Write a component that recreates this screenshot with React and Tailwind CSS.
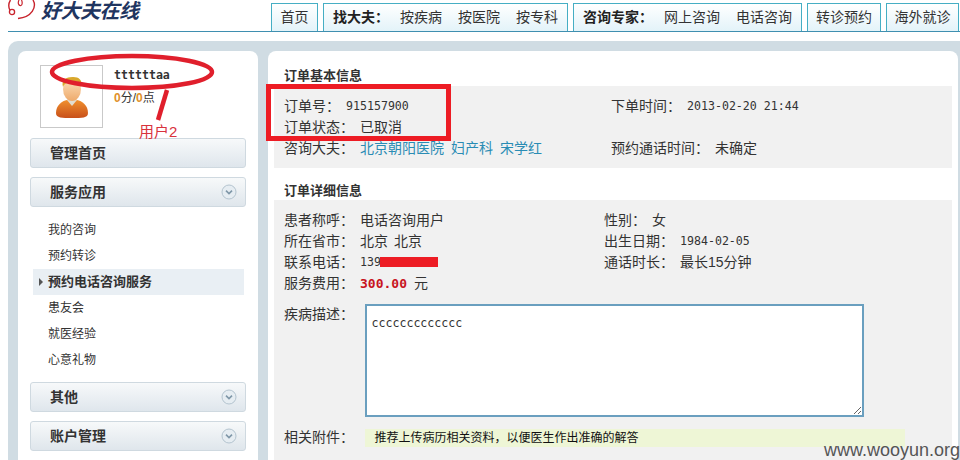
import React from "react";

const cjk = "font-['Liberation_Sans','Noto_Sans_CJK_SC',sans-serif]";
const mono = "font-['DejaVu_Sans_Mono','Noto_Sans_CJK_SC',monospace]";

function NavLink({ children, bold, className = "" }) {
  return <span className={(bold ? "font-bold text-[#222] " : "text-[#333] ") + className}>{children}</span>;
}

function NavTab({ className, children }) {
  return (
    <div className={"flex h-[28px] items-center border border-b-0 border-[#45aec4] bg-gradient-to-b from-white to-[#e3f3f9] text-[14px] " + className}>
      {children}
    </div>
  );
}

function Chevron() {
  return (
    <svg width="16" height="16" viewBox="0 0 16 16" className="shrink-0">
      <circle cx="8" cy="8" r="7" fill="#e6edf2" stroke="#b4c4cf" strokeWidth="1" />
      <path d="M5 6.6 L8 9.6 L11 6.6" fill="none" stroke="#7f97a8" strokeWidth="1.6" />
    </svg>
  );
}

function SideButton({ label, chevron, className = "" }) {
  return (
    <div className={"flex h-[30px] w-[216px] items-center justify-between rounded-[3px] border border-[#cfd9e0] bg-gradient-to-b from-[#f7f9fa] to-[#dfe6ec] pl-[19px] pr-[8px] text-[14px] font-bold text-[#333] " + className}>
      <span>{label}</span>
      {chevron ? <Chevron /> : null}
    </div>
  );
}

function MenuItem({ children, active }) {
  if (active) {
    return (
      <div className="relative flex h-[26px] w-[211px] items-center bg-[#e9eff4] pl-[15px] text-[13px] font-bold text-[#333]">
        <span className="absolute left-[6px] top-[9px] h-0 w-0 border-y-[4px] border-l-[4px] border-y-transparent border-l-[#555]"></span>
        {children}
      </div>
    );
  }
  return <div className="flex h-[26px] items-center pl-[15px] text-[12px] text-[#333]">{children}</div>;
}

function Avatar() {
  return (
    <div className="flex h-[63px] w-[63px] items-end justify-center border border-[#c9c9c9] bg-white pb-[9px]">
      <svg width="32" height="41" viewBox="0 0 32 41">
        <defs>
          <linearGradient id="shirt" x1="0" y1="0" x2="0" y2="1">
            <stop offset="0" stopColor="#f0902e" />
            <stop offset="1" stopColor="#c8501a" />
          </linearGradient>
          <linearGradient id="skin" x1="0" y1="0" x2="0" y2="1">
            <stop offset="0" stopColor="#fde3c0" />
            <stop offset="1" stopColor="#eeaa6c" />
          </linearGradient>
        </defs>
        <path d="M0 36 C0 28 6 24 11 23 L21 23 C26 24 32 28 32 36 C32 41 26 41 16 41 C6 41 0 41 0 36Z" fill="url(#shirt)" />
        <path d="M11 23 L16 29 L21 23 L20 20 L12 20Z" fill="#e2ddd0" />
        <ellipse cx="16" cy="12" rx="9" ry="12" fill="url(#skin)" />
        <path d="M7 10 C5 3 10 0 17 0 C23 0 27 3 25 10 C24 6 22 4 19 4 C14 5 9 5 7 10Z" fill="#d9a82c" />
      </svg>
    </div>
  );
}

function Label({ children, value, valueClass }) {
  return (
    <div className="flex h-[21px] items-center whitespace-nowrap text-[14px] text-[#333]">
      <span>{children}</span>
      <span className={"ml-[6px] " + valueClass}>{value}</span>
    </div>
  );
}

export default function App() {
  return (
    <div className={"relative h-[460px] w-[960px] overflow-hidden bg-white " + cjk}>
      {/* header */}
      <div className="ml-2 flex h-[32px] items-end border-b border-[#3f8fb0]">
        <div className="flex h-[31px] w-[263px] items-start">
          <svg width="30" height="20" viewBox="0 0 30 20" className="shrink-0">
            <circle cx="4" cy="12" r="2.6" fill="none" stroke="#c8232c" strokeWidth="1.3" />
            <path d="M2.5 0 C0.5 3 0.5 7 1.8 10 M25 0 C29 7 24 17 10 18.5" fill="none" stroke="#c8232c" strokeWidth="1.4" />
            <path d="M11 0 C9.5 3 10.5 6 13 5.5 C14.5 5 14.5 2 13.5 0" fill="none" stroke="#c8232c" strokeWidth="1.2" />
          </svg>
          <div className="-mt-[4px] ml-[3px] text-[20px] font-bold italic tracking-[-0.5px] whitespace-nowrap text-[#1f3560]">好大夫在线</div>
        </div>
        <div className="flex gap-[5px]">
          <NavTab className="w-[47px] justify-center"><NavLink>首页</NavLink></NavTab>
          <NavTab className="w-[245px] pl-[9px]">
            <NavLink bold>找大夫：</NavLink>
            <NavLink className="ml-[11px]">按疾病</NavLink>
            <NavLink className="ml-[16px]">按医院</NavLink>
            <NavLink className="ml-[16px]">按专科</NavLink>
          </NavTab>
          <NavTab className="w-[229px] pl-[9px]">
            <NavLink bold>咨询专家：</NavLink>
            <NavLink className="ml-[11px]">网上咨询</NavLink>
            <NavLink className="ml-[16px]">电话咨询</NavLink>
          </NavTab>
          <NavTab className="w-[74px] justify-center"><NavLink>转诊预约</NavLink></NavTab>
          <NavTab className="w-[73px] justify-center"><NavLink>海外就诊</NavLink></NavTab>
        </div>
      </div>

      {/* panel */}
      <div className="ml-2 mt-[9px] flex h-[419px] gap-[10px] rounded-tl-[10px] bg-[#d0dce3] pl-[10px] pr-[2px] pt-[10px]">
        <div className="w-[240px] shrink-0 rounded-t-[8px] bg-white pl-[12px]">
          <div className="ml-[10px] mt-[14px] flex h-[63px]">
            <Avatar />
            <div className="ml-[11px] pt-[2px]">
              <div className={"h-[16px] text-[11.6px] font-bold leading-[16px] text-[#333] " + mono}>ttttttaa</div>
              <div className="mt-[7px] text-[12px] leading-[16px] text-[#333]">
                <b className="text-[#e0902a]">0</b>分/<b className="text-[#e0902a]">0</b>点
              </div>
            </div>
          </div>
          <SideButton label="管理首页" className="mt-[10px]" />
          <SideButton label="服务应用" chevron className="mt-[9px]" />
          <div className="mb-[9px] ml-[3px] mt-[10px]">
            <MenuItem>我的咨询</MenuItem>
            <MenuItem>预约转诊</MenuItem>
            <MenuItem active>预约电话咨询服务</MenuItem>
            <MenuItem>患友会</MenuItem>
            <MenuItem>就医经验</MenuItem>
            <MenuItem>心意礼物</MenuItem>
          </div>
          <SideButton label="其他" chevron />
          <SideButton label="账户管理" chevron className="mt-[9px]" />
        </div>

        <div className="w-[690px] shrink-0 rounded-t-[8px] bg-white px-[6px]">
          <div className="flex h-[35px] items-end pb-[1px] pl-[10px] text-[13px] font-bold leading-[18px] text-[#333]">订单基本信息</div>
          <div className="grid h-[82px] grid-cols-[327px_1fr] content-start bg-[#f1f1f1] pl-[10px] pt-[10px]">
            <Label value="915157900" valueClass={"text-[11.6px] " + mono}>订单号：</Label>
            <Label value="2013-02-20 21:44" valueClass={"text-[11.6px] " + mono}>下单时间：</Label>
            <Label value="已取消" valueClass="">订单状态：</Label>
            <div></div>
            <Label
              value={
                <span className="flex gap-[7px] text-[#2a8cb4]">
                  <span>北京朝阳医院</span>
                  <span>妇产科</span>
                  <span>宋学红</span>
                </span>
              }
              valueClass=""
            >
              咨询大夫：
            </Label>
            <Label value="未确定" valueClass="">预约通话时间：</Label>
          </div>
          <div className="flex h-[32px] items-end pl-[10px] text-[13px] font-bold leading-[18px] text-[#333]">订单详细信息</div>
          <div className="h-[260px] bg-[#f1f1f1] pl-[10px] pt-[10px]">
            <div className="grid grid-cols-[320px_1fr]">
              <Label value="电话咨询用户" valueClass="">患者称呼：</Label>
              <Label value="女" valueClass="">性别：</Label>
              <Label value="北京 北京" valueClass="[word-spacing:2px]">所在省市：</Label>
              <Label value="1984-02-05" valueClass={"text-[11.6px] " + mono}>出生日期：</Label>
              <Label value="139" valueClass={"text-[11.6px] " + mono}>联系电话：</Label>
              <Label value="最长15分钟" valueClass="">通话时长：</Label>
              <Label
                value={
                  <span className="flex items-center gap-[7px]">
                    <span className={"text-[13px] font-bold text-[#c8141e] " + mono}>300.00</span>
                    <span>元</span>
                  </span>
                }
                valueClass=""
              >
                服务费用：
              </Label>
            </div>
            <div className="mt-[10px] flex">
              <div className="w-[80.5px] shrink-0 text-[14px] leading-[21px] text-[#333]">疾病描述：</div>
              <textarea
                readOnly
                value="ccccccccccccc"
                className={"h-[113px] w-[499px] rounded-none border-2 border-[#6a9fbf] bg-white px-[5px] py-[9px] text-[11.6px] leading-[16px] text-[#333] outline-none " + mono}
              />
            </div>
            <div className="mt-[10px] flex items-center">
              <div className="w-[80.5px] shrink-0 text-[14px] text-[#333]">相关附件：</div>
              <div className="flex h-[18px] w-[540px] items-center bg-[#eef6d6] pl-[10px] text-[12px] text-[#111]">推荐上传病历相关资料，以便医生作出准确的解答</div>
            </div>
          </div>
        </div>
      </div>

      {/* watermark */}
      <div className="absolute right-0 top-[440px] text-[18px] leading-[20px] text-[#555]">www.wooyun.org</div>

      {/* red annotations */}
      <svg width="960" height="460" viewBox="0 0 960 460" className="pointer-events-none absolute left-0 top-0">
        <ellipse cx="132" cy="72" rx="80" ry="16" fill="none" stroke="#e01f2c" strokeWidth="4.5" />
        <path d="M167 90 L158 120" fill="none" stroke="#e01f2c" strokeWidth="4.5" />
        <rect x="268.5" y="86.5" width="180" height="52" fill="none" stroke="#ed1c24" strokeWidth="5" />
        <rect x="380" y="257" width="58" height="10" fill="#ed1c24" />
      </svg>
      <div className="absolute left-[139px] top-[122px] text-[15px] leading-[20px] text-[#d8323c]">用户2</div>
    </div>
  );
}
